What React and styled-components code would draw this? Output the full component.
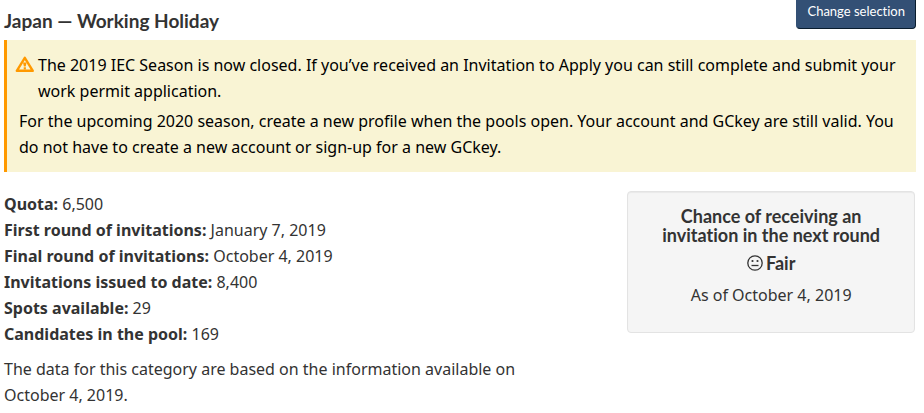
import React from 'react'
import styled, { createGlobalStyle } from 'styled-components';
const GlobalStyle = createGlobalStyle`
  * {
    box-sizing: border-box;
  }
  body {
    margin: 0;
    background-color: #fff;
    color: #333;
    font-family: "Noto Sans", sans-serif;
    font-size: 16px;
    line-height: 26px;
  }
`;
const Container = styled.main`
  padding: 0 8px 5px 4px;
`;
const Header = styled.header`
  display: flex;
  align-items: flex-start;
  justify-content: space-between;
  height: 40px;
`;
const Title = styled.h1`
  margin: 8px 0 0;
  font-family: Lato, sans-serif;
  font-size: 19px;
  font-weight: 700;
  font-variant-ligatures: none;
  line-height: 26px;
`;
const Button = styled.button`
  height: 29px;
  padding: 0 10px 6px;
  border: 1px solid #091c2d;
  border-top: none;
  border-left-color: #335075;
  border-radius: 0 0 4px 4px;
  background-color: #335075;
  color: #fff;
  font-family: Lato, sans-serif;
  font-size: 13px;
  font-variant-ligatures: none;
  line-height: 22px;
  cursor: pointer;
`;
const Alert = styled.section`
  padding: 12px;
  border-left: 3px solid #ff9900;
  background-color: #f9f4d4;
  color: #000;
`;
const AlertLead = styled.div`
  display: flex;
  margin: 0 0 4px -4px;
`;
const AlertIcon = styled.svg`
  flex: none;
  width: 20px;
  height: 18px;
  margin: 3px 3px 0 0;
`;
const Text = styled.p`
  margin: 0;
`;
const Content = styled.div`
  display: grid;
  grid-template-columns: 2fr 1fr;
  gap: 48px;
  align-items: start;
  padding: 19px 1px 0 0;
`;
const Details = styled.div`
  padding-right: 16px;
`;
const List = styled.ul`
  margin: 0 0 9px;
  padding: 0;
  list-style: none;
`;
const Card = styled.aside`
  min-height: 142px;
  padding: 15px 20px;
  border: 1px solid #e3e3e3;
  border-radius: 4px;
  background-color: #f5f5f5;
  box-shadow: inset 0 1px 1px rgba(0, 0, 0, 0.05);
  text-align: center;
`;
const CardTitle = styled.h2`
  margin: 0 0 8px;
  font-family: Lato, sans-serif;
  font-size: 18px;
  font-weight: 700;
  font-variant-ligatures: none;
  line-height: 19px;
`;
const Rating = styled.p`
  display: flex;
  align-items: center;
  justify-content: center;
  gap: 3px;
  margin: 0 0 9px;
  font-family: Lato, sans-serif;
  font-size: 18px;
  font-weight: 700;
  line-height: 20px;
`;
const FaceIcon = styled.svg`
  width: 16px;
  height: 16px;
`;

const details = [
  { label: 'Quota', value: '6,500' },
  { label: 'First round of invitations', value: 'January 7, 2019' },
  { label: 'Final round of invitations', value: 'October 4, 2019' },
  { label: 'Invitations issued to date', value: '8,400' },
  { label: 'Spots available', value: '29' },
  { label: 'Candidates in the pool', value: '169' },
];

const App = () => {
    return (
        <Container>
            <GlobalStyle />
            <Header>
                <Title>Japan — Working Holiday</Title>
                <Button type='button'>Change selection</Button>
            </Header>
            <Alert>
                <AlertLead>
                    <AlertIcon viewBox='0 0 20 18' aria-hidden='true'>
                        <path d='M9.8 2.8 L17.8 15.8 H1.8 Z' fill='none' stroke='#ff9900' strokeWidth='2.4' strokeLinejoin='round' />
                        <path d='M8 7.4 h3.6 l-.9 4 h-1.8 Z M8.7 12.2 h2.2 v2.4 h-2.2 Z' fill='#ff9900' />
                    </AlertIcon>
                    <Text>The 2019 IEC Season is now closed. If you’ve received an Invitation to Apply you can still complete and submit your work permit application.</Text>
                </AlertLead>
                <Text>For the upcoming 2020 season, create a new profile when the pools open. Your account and GCkey are still valid. You do not have to create a new account or sign-up for a new GCkey.</Text>
            </Alert>
            <Content>
                <Details>
                    <List>
                        {details.map((item) => (
                            <li key={item.label}><strong>{item.label}:</strong> {item.value}</li>
                        ))}
                    </List>
                    <Text>The data for this category are based on the information available on October 4, 2019.</Text>
                </Details>
                <Card>
                    <CardTitle>Chance of receiving an invitation in the next round</CardTitle>
                    <Rating>
                        <FaceIcon viewBox='0 0 16 16' aria-hidden='true'>
                            <circle cx='8' cy='8' r='7.2' fill='none' stroke='#333' strokeWidth='1.3' />
                            <path d='M4.5 10.5 h7' stroke='#333' strokeWidth='1.3' />
                            <circle cx='5.5' cy='6' r='1.1' fill='#333' />
                            <circle cx='10.5' cy='6' r='1.1' fill='#333' />
                        </FaceIcon>
                        Fair
                    </Rating>
                    <Text>As of October 4, 2019</Text>
                </Card>
            </Content>
        </Container>
    )
}

export default App
